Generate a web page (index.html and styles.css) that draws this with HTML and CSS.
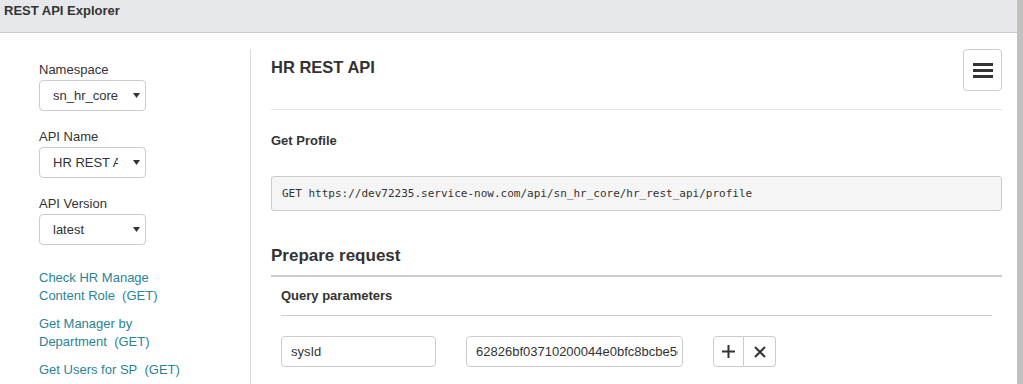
FILE: index.html
```html
<!DOCTYPE html>
<html lang="en">
<head>
    <meta charset="UTF-8">
    <title>REST API Explorer</title>
    <link rel="stylesheet" href="styles.css">
</head>
<body>
<div class="app">
    <div class="page">
        <div class="topbar">REST API Explorer</div>

        <div class="content">
            <div class="sidebar">
                <div class="field">
                    <div class="field-label">Namespace</div>
                    <div class="select-box">
                        <span class="select-text">sn_hr_core</span>
                        <svg class="caret" width="7" height="5" viewBox="0 0 7 5"><path d="M0 0h7L3.5 5z" fill="#333"/></svg>
                    </div>
                </div>
                <div class="field">
                    <div class="field-label">API Name</div>
                    <div class="select-box">
                        <span class="select-text">HR REST API</span>
                        <svg class="caret" width="7" height="5" viewBox="0 0 7 5"><path d="M0 0h7L3.5 5z" fill="#333"/></svg>
                    </div>
                </div>
                <div class="field">
                    <div class="field-label">API Version</div>
                    <div class="select-box">
                        <span class="select-text">latest</span>
                        <svg class="caret" width="7" height="5" viewBox="0 0 7 5"><path d="M0 0h7L3.5 5z" fill="#333"/></svg>
                    </div>
                </div>

                <ul class="method-list">
                    <li><a href="#">Check HR Manage Content Role&nbsp; (GET)</a></li>
                    <li><a href="#">Get Manager by Department&nbsp; (GET)</a></li>
                    <li><a href="#">Get Users for SP&nbsp; (GET)</a></li>
                </ul>
            </div>

            <div class="main">
                <div class="main-head">
                    <h1 class="api-title">HR REST API</h1>
                    <button class="menu-button">
                        <svg width="20" height="15" viewBox="0 0 20 15">
                            <rect x="0" y="0" width="20" height="3" fill="#333"/>
                            <rect x="0" y="6" width="20" height="3" fill="#333"/>
                            <rect x="0" y="12" width="20" height="3" fill="#333"/>
                        </svg>
                    </button>
                </div>

                <h2 class="method-name">Get Profile</h2>
                <div class="endpoint">GET https://dev72235.service-now.com/api/sn_hr_core/hr_rest_api/profile</div>

                <h2 class="section-title">Prepare request</h2>
                <div class="params">
                    <h3 class="params-title">Query parameters</h3>
                    <div class="param-row">
                        <input class="param-name" type="text" value="sysId">
                        <input class="param-value" type="text" value="62826bf03710200044e0bfc8bcbe5d3b">
                        <div class="param-actions">
                            <button class="icon-button">
                                <svg width="13" height="13" viewBox="0 0 13 13"><path d="M6.5 0v13M0 6.5h13" stroke="#333" stroke-width="2"/></svg>
                            </button>
                            <button class="icon-button">
                                <svg width="12" height="12" viewBox="0 0 12 12"><path d="M1 1l10 10M11 1L1 11" stroke="#333" stroke-width="2"/></svg>
                            </button>
                        </div>
                    </div>
                </div>
            </div>
        </div>
    </div>
    <div class="scrollbar"></div>
</div>
</body>
</html>
```

FILE: styles.css
```css
body {
    margin: 0;
    height: 100vh;
    overflow: hidden;
    font-family: "Liberation Sans", Arial, sans-serif;
    font-size: 13px;
    color: #333;
    background: #fff;
}

.app {
    display: flex;
    height: 100%;
}

.page {
    flex: 1;
    display: flex;
    flex-direction: column;
    min-width: 0;
}

.scrollbar {
    width: 6px;
    background: #c1c1c1;
}

.topbar {
    flex-shrink: 0;
    height: 33px;
    box-sizing: border-box;
    padding: 3px 4px 0;
    line-height: 16px;
    font-weight: bold;
    background: #e6e8eb;
    border-bottom: 1px solid #c9cbcd;
}

.content {
    flex: 1;
    min-height: 0;
    display: flex;
    margin-top: 16px;
}

/* Sol menü */
.sidebar {
    width: 211px;
    padding: 12px 0 0 39px;
    border-right: 1px solid #dadada;
}

.field {
    margin-bottom: 17px;
}

.field-label {
    line-height: 18px;
    margin-bottom: 1px;
}

.select-box {
    width: 107px;
    height: 31px;
    box-sizing: border-box;
    border: 1px solid #ccc;
    border-radius: 4px;
    padding-left: 13px;
    display: flex;
    align-items: center;
}

.select-text {
    width: 65px;
    overflow: hidden;
    white-space: nowrap;
}

.caret {
    margin-left: 15px;
}

.method-list {
    list-style: none;
    margin: 24px 0 0;
    padding: 0;
    width: 150px;
}

.method-list li {
    line-height: 18px;
    margin-bottom: 10px;
}

.method-list a {
    color: #2a8495;
    text-decoration: none;
}

/* Ana bölüm */
.main {
    flex: 1;
    padding: 0 15px 0 20px;
}

.main-head {
    display: flex;
    justify-content: space-between;
    align-items: flex-start;
    padding-bottom: 18px;
    border-bottom: 1px solid #e5e5e5;
}

.api-title {
    margin: 8px 0 0;
    font-size: 16.5px;
    line-height: 20px;
}

.menu-button {
    width: 39px;
    height: 42px;
    padding: 0;
    background: #fff;
    border: 1px solid #ccc;
    border-radius: 4px;
    display: flex;
    align-items: center;
    justify-content: center;
}

.method-name {
    margin: 22px 0 0;
    font-size: 13px;
    line-height: 18px;
}

.endpoint {
    margin-top: 26px;
    height: 35px;
    box-sizing: border-box;
    padding: 0 10px;
    display: flex;
    align-items: center;
    font-family: "DejaVu Sans Mono", monospace;
    font-size: 11px;
    background: #f5f5f5;
    border: 1px solid #ccc;
    border-radius: 3px;
}

.section-title {
    margin: 34px 0 0;
    font-size: 17px;
    line-height: 22px;
    padding-bottom: 8px;
    border-bottom: 2px solid #ccc;
}

.params {
    margin: 0 10px;
}

.params-title {
    margin: 10px 0 0;
    font-size: 13px;
    line-height: 18px;
    padding-bottom: 10px;
    border-bottom: 1px solid #ccc;
}

.param-row {
    display: flex;
    align-items: center;
    margin-top: 20px;
}

.param-row input {
    height: 31px;
    box-sizing: border-box;
    border: 1px solid #ccc;
    border-radius: 4px;
    padding: 0 4px 0 9px;
    font-family: "Liberation Sans", Arial, sans-serif;
    font-size: 13px;
    color: #333;
}

.param-name {
    width: 155px;
}

.param-value {
    width: 217px;
    margin-left: 30px;
}

.param-actions {
    display: flex;
    margin-left: 30px;
}

.icon-button {
    width: 31px;
    height: 31px;
    padding: 0;
    background: #fff;
    border: 1px solid #ccc;
    display: flex;
    align-items: center;
    justify-content: center;
}

.icon-button:first-child {
    border-radius: 4px 0 0 4px;
}

.icon-button:last-child {
    border-left: none;
    width: 32px;
    border-radius: 0 4px 4px 0;
}
```
